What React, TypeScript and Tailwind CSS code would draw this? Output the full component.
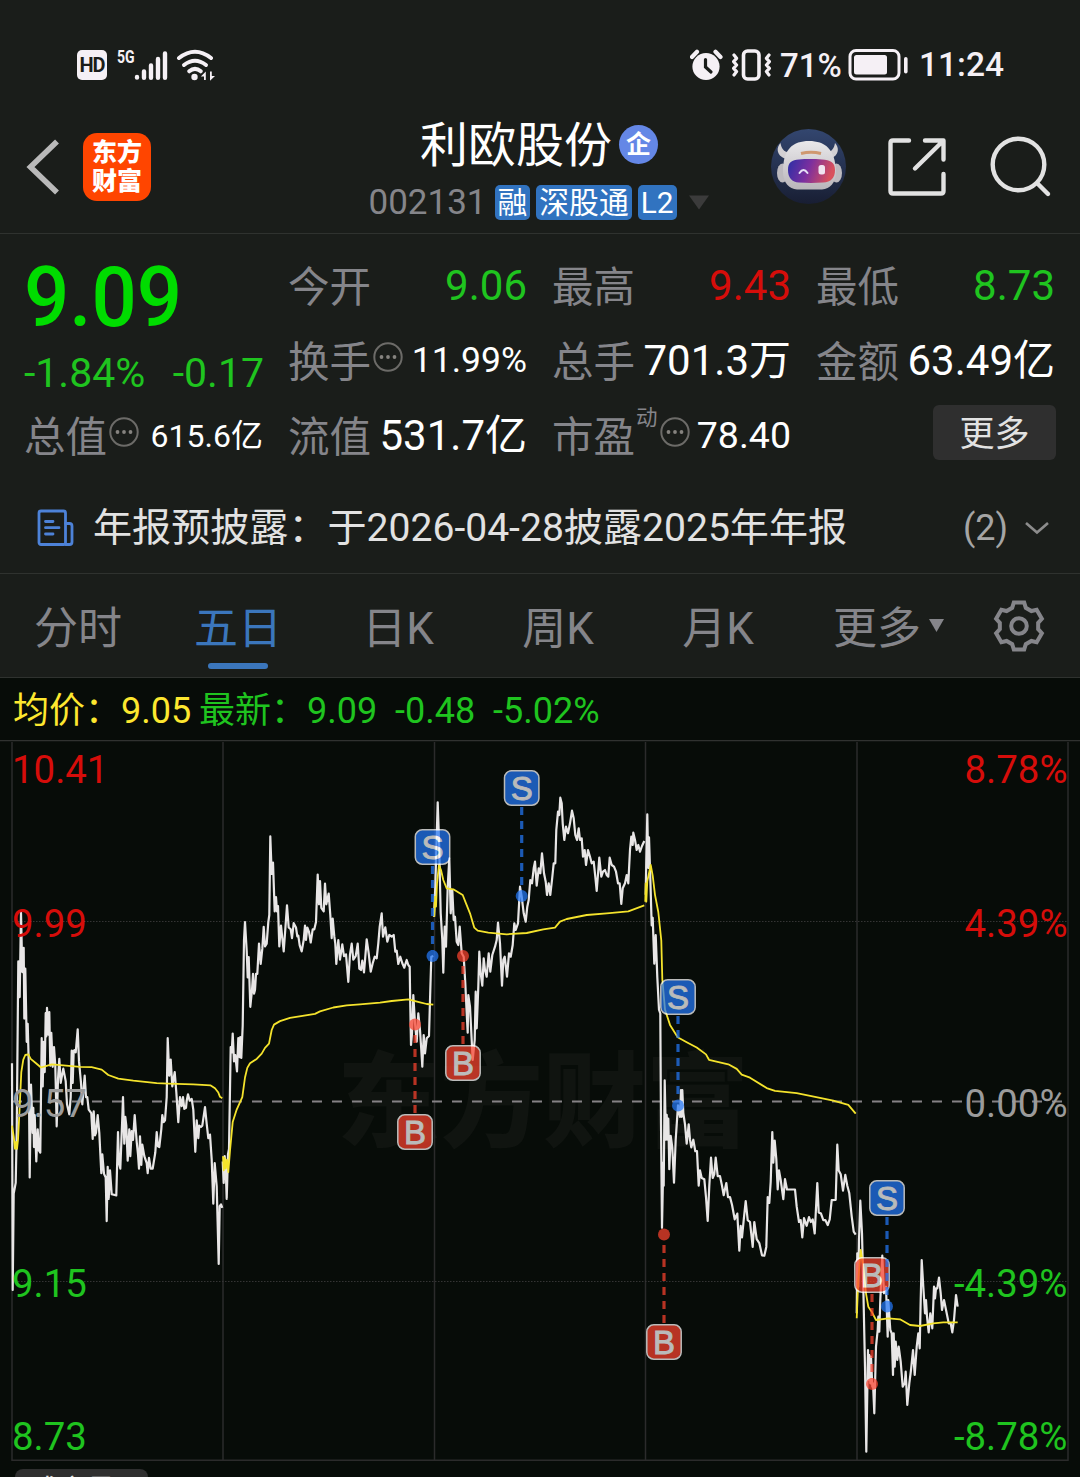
import React from 'react'
import clsx from 'clsx'

type QuoteProps = {
  label: string,
  value: string,
  sup?: string,
  info?: boolean,
  valueClass?: string
}

type Segment = {
  x: number,
  y: number,
  sx: number,
  sy: number,
  points: string
}

type Mark = {
  type: 'S' | 'B',
  x: number,
  box: number,
  dot: number
}

const tabs = ['分时', '五日', '日K', '周K', '月K']

const gridX = [12, 223, 434.5, 645.5, 857, 1068]

const leftLabels = [
  { text: '10.41', y: 783, color: '#d60d0a' },
  { text: '9.99', y: 937, color: '#d60d0a' },
  { text: '9.57', y: 1117, color: '#9b9b9b' },
  { text: '9.15', y: 1297, color: '#1fc41f' },
  { text: '8.73', y: 1450, color: '#1fc41f' }
]

const rightLabels = [
  { text: '8.78%', y: 783, color: '#d60d0a' },
  { text: '4.39%', y: 937, color: '#d60d0a' },
  { text: '0.00%', y: 1117, color: '#9b9b9b' },
  { text: '-4.39%', y: 1297, color: '#1fc41f' },
  { text: '-8.78%', y: 1450, color: '#1fc41f' }
]

const marks: Mark[] = [
  { type: 'S', x: 432.5, box: 847, dot: 956 },
  { type: 'S', x: 521.7, box: 788, dot: 896 },
  { type: 'B', x: 415, box: 1132, dot: 1024.5 },
  { type: 'B', x: 463, box: 1063, dot: 956 },
  { type: 'S', x: 678, box: 997, dot: 1105.5 },
  { type: 'B', x: 664, box: 1342, dot: 1234.5 },
  { type: 'B', x: 872, box: 1275, dot: 1384 },
  { type: 'S', x: 887, box: 1198, dot: 1306.5 }
]

const price: Segment[][] = [
  [
    { x: 0, y: 740, sx: 3, sy: 2.8, points: '36,905 38,1540 41,1270 47,1240 50,1100 55,620 59,720 63,483 67,650 71,582 73,780 76,640 80,845 83,795 86,900 89,1225 93,965 98,1100 100,1030 102,1140 104,1050 109,1180 113,1090 117,1150 121,1155 125,835 128,970 131,845 134,930 137,765 139,830 141,750 145,825 148,762 151,912 154,820 158,915 162,860 166,912 170,1082 174,950 178,893 182,960 187,935 190,920 197,955 201,1020 208,1048 212,1000 215,870 218,960 221,870 225,868 227,875 233,810 237,900 243,960 247,1020 254,940 258,1000 262,1000 266,1035 274,1045 278,1117 281,1040 285,1107 288,1100 293,1050 298,1100 304,1213 307,1160 312,1215 317,1225 320,1347 323,1195 326,1285 330,1205 335,1272 349,1275 354,1098 357,1185 361,1200 366,1080 369,1000 373,1130 376,1055 379,1080 383,1178 388,1090 391,1165 395,1095 399,1120 404,1050 410,1125 414,1160 417,1200 420,1110 424,1190 427,1133 433,1165 440,1185 443,1213 447,1170 452,1200 458,1200 466,1155 470,1098 474,1138 478,1140 484,1090 487,1050 491,1070 495,1065 500,1000 503,835 508,940 512,895 517,970 524,930 529,985 535,1070 540,1000 545,1025 549,1000 553,1033 558,1030 560,1010 564,992 569,1010 575,1005 580,1035 586,1153 590,1065 595,1115 598,1080 603,1083 607,1080 615,1028 620,1075 625,1115 630,1105 635,1175 640,1298 644,1185 650,1250 656,1467 659,1305 663,1300 667,1310' }
  ],
  [
    { x: 0, y: 740, sx: 3, sy: 2.8, points: '668,1180 671,1240 674,1165 677,1200 680,1285 684,1160 687,1145 692,860 695,875 698,822 702,900 706,882 711,928 715,835 719,888 721,832 724,890 728,800 732,560 735,510 740,590 743,665 746,608 751,747 756,700 759,655 762,710 765,700 768,655 772,655 777,570 782,627 787,585 791,523 795,578 800,570 805,510 808,490 811,270 815,375 819,343 824,480 828,440 831,480 834,465 838,578 843,520 851,592 856,530 861,463 866,525 872,530 876,555 881,513 888,525 892,550 895,548 899,575 905,592 911,560 915,520 918,560 922,525 927,537 932,567 938,530 943,530 948,510 953,377 957,460 960,395 964,470 971,480 975,402 979,460 986,430 991,490 995,555 998,500 1003,550 1006,570 1009,627 1015,560 1020,615 1027,572 1032,605 1038,600 1045,677 1050,600 1055,570 1060,615 1067,605 1073,570 1078,640' },
    { x: 360, y: 740, sx: 3, sy: 3, points: '3,690 7,662 12,697 16,650 20,598 26,640 32,695 38,670 44,650 50,655 55,610 59,560 65,520 69,590 76,562 82,605 88,585 95,590 101,585 106,635 110,632 115,672 121,650 127,670 133,683 140,660 145,675 149,680 151,800 153,915 156,880 160,765 165,850 170,905 175,820 180,870 184,930 187,980 191,885 195,940 200,895 207,888 211,750 214,650 220,648' }
  ],
  [
    { x: 360, y: 740, sx: 3, sy: 3, points: '222,530 226,440 230,290 233,187 237,300 242,520 247,600 250,698 254,560 258,620 263,440 268,355 272,520 277,450 281,540 285,530 290,605 295,615 299,560 305,640 311,650 316,730 320,820 323,878 325,765 330,800 338,960 344,900 347,755 350,865 355,740 358,635 362,700 367,737 371,655 375,690 380,710 386,640 391,695 397,645 405,620 410,600 414,548 420,610 426,737 430,660 434,650 441,710 447,640 452,650 458,615 463,550 467,570 474,550 480,440 485,470 491,520 497,545 502,500 506,480 511,420 516,430 521,385 525,365 530,437 536,385 541,400 546,340 552,400 557,425 561,465 566,430 571,465 576,420 581,370 586,370 589,270 594,215 598,225 601,173 605,190 608,250 613,300 618,260 624,280 630,250 636,212 641,235 646,285 651,300 656,265 660,300 665,295 669,350 674,330 678,375 684,330 690,350 695,370 701,365 706,410 710,453 718,353 724,410 729,395 735,390 740,405 745,410 749,353 755,375 762,380 768,395 774,430 779,430 784,492 788,445 795,430 800,405 805,430 810,330 814,290 818,315 820,278 825,300 830,330 835,315 840,335 846,318 853,303' }
  ],
  [
    { x: 600, y: 780, sx: 3, sy: 2.613, points: '137,300 139,210 142,90 145,230 147,150 150,230 155,380 158,360 163,480 167,405 172,515 177,600 181,610 183,900 186,1170 190,1000 191,1060 194,785 197,910 198,940 200,875 203,940 205,885 208,1017 212,930 217,960 222,1052 227,940 234,850 240,880 243,810 245,880 247,810 250,870 255,900 260,950 266,900 270,940 274,960 280,940 286,970 291,970 296,1060 300,1020 305,1040 313,1043 318,1090 323,1152 328,1060 333,987 338,1040 343,1030 347,987 353,1035 360,1035 366,1060 371,1085 379,1053 384,1090 390,1090 396,1110 404,1148 412,1133 418,1230 422,1165 426,1195 431,1150 437,1100 443,1150 450,1155 458,1220 463,1155 470,1200 478,1210 486,1242 493,1243 499,1220 503,1090 508,1105 512,1050 517,920 520,1000 524,942 529,990 533,1070 537,1020 542,1045 550,1095 555,1043 561,1070 570,1070 585,1070 590,1115 597,1155 602,1150 607,1195 612,1145 620,1165 627,1142 632,1155 638,1148 644,1185 652,1053 656,1130 663,1133 670,1150 676,1150 683,1163 689,1148 695,1098 707,1097 712,953 716,1020 722,1030 729,1073 736,1032 742,1060 748,1080 755,1140 761,1180 767,1188' }
  ],
  [
    { x: 800, y: 1100, sx: 3, sy: 3, points: '170,640 172,460 175,560 177,420 181,302 186,400 190,560 195,800 199,1055 204,750 206,840 208,765 211,850 213,770 217,860 219,850 223,940 228,740 233,690 235,650 238,695 241,600 247,467 252,580 258,560 263,710 265,600 271,690 275,700 279,825 281,700 284,800 287,725 292,780 296,740 302,785 308,860 314,850 317,815 322,915 328,850 333,810 339,750 344,825 350,740 355,700 359,745 362,600 365,480 370,560 375,640 378,600 381,650 386,697 391,640 397,685 402,560 405,595 408,565 412,565 417,533 422,580 426,630 432,600 440,640 446,670 452,670 457,697 462,660 468,585 473,620' }
  ]
]

const average: Segment[][] = [
  [
    { x: 0, y: 740, sx: 3, sy: 2.8, points: '36,1080 41,1110 45,1145 48,1125 51,1145 54,1120 58,1050 64,930 70,895 76,882 85,880 92,893 108,905 123,917 135,914 155,908 190,911 240,915 275,916 305,923 325,938 355,948 400,954 470,961 505,962 580,964 632,967 645,975 655,987 660,999 667,1003' }
  ],
  [
    { x: 0, y: 740, sx: 3, sy: 2.8, points: '669,1165 671,1205 674,1170 677,1200 681,1175 685,1210 690,1150 698,1070 710,1035 727,1000 735,945 742,918 750,905 770,893 785,878 795,862 807,850 815,812 822,797 840,787 870,778 945,767 960,760 1000,749 1040,743' },
    { x: 360, y: 740, sx: 3, sy: 3, points: '0,793 60,788 95,783 145,778 180,787 200,792 220,794' }
  ],
  [
    { x: 360, y: 740, sx: 3, sy: 3, points: '223,530 225,470 228,500 231,430 237,375 243,390 250,420 260,445 280,448 308,465 318,490 330,520 336,540 343,563 353,572 385,578 440,583 500,579 550,568 585,563 600,545 620,537 680,525 740,520 805,514 853,496' }
  ],
  [
    { x: 600, y: 780, sx: 3, sy: 2.613, points: '136,318 137,270 139,318 142,265 152,222 158,250 165,300 175,345 184,420 187,520 195,600 210,640 233,672 260,685 290,699 318,717 327,731 385,743 410,755 425,770 450,778 500,805 525,812 590,818 700,838 745,849 767,872' }
  ],
  [
    { x: 800, y: 1100, sx: 3, sy: 3, points: '170,655 175,540 182,450 190,500 198,580 205,620 215,635 228,660 265,655 300,658 330,675 360,678 400,670 430,667 473,667' }
  ]
]

const toPoints = (segments: Segment[]) =>
  segments
    .map(s =>
      s.points
        .split(' ')
        .map(p => {
          const [px, py] = p.split(',').map(Number)
          return `${(s.x + px / s.sx).toFixed(1)},${(s.y + py / s.sy).toFixed(1)}`
        })
        .join(' ')
    )
    .join(' ')

const gearPoints = Array.from({ length: 6 })
  .flatMap((_, i) => {
    const a = (i * Math.PI) / 3
    return [[-6.8, -18.2], [-5.2, -23.4], [5.2, -23.4], [6.8, -18.2]].map(([x, y]) => {
      const rx = 26 + x * Math.cos(a) - y * Math.sin(a)
      const ry = 26 + x * Math.sin(a) + y * Math.cos(a)
      return `${rx.toFixed(2)},${ry.toFixed(2)}`
    })
  })
  .join(' ')

const StatusBar = () => (
  <div className="flex h-[100px] items-center justify-between pt-[30px] pl-[77px] pr-[77px] text-[33.500px] font-medium leading-none text-[#f5f0f5]">
    <div className="flex items-center">
      <div className="flex h-[30px] w-[30px] items-center justify-center rounded-[5px] bg-[#f5f0f5] text-[20px] font-bold tracking-[-1px] text-[#1a1d1a]">HD</div>
      <div className="ml-[10px] mb-[17px] flex h-[16px] w-[18px] items-center">
        <span className="origin-left scale-x-[0.78] text-[18px] font-bold">5G</span>
      </div>
      <svg width="34" height="32" viewBox="0 0 34 32" className="-ml-[1px]" stroke="#f5f0f5" strokeWidth="4.4" strokeLinecap="round">
        <path d="M3 28v0.6M10 22.5v6.2M17 16.5v12.2M24 10v18.7M31 4.5v24.2" />
      </svg>
      <svg width="40" height="32" viewBox="0 0 40 32" className="ml-[8px]" fill="none" stroke="#f5f0f5" strokeWidth="4" strokeLinecap="round">
        <path d="M3 9Q19 -3.500 35 9" />
        <path d="M8 16Q19 7.500 30 16" />
        <path d="M13.200 22.300Q19 17.300 24.800 22.300" />
        <circle cx="18.500" cy="28" r="3.200" fill="#f5f0f5" stroke="none" />
        <path d="M24.800 27.500l5-5v8.500h-1.800v-3.500zM39 27l-5 4.700v-9.200h1.800v4.500z" fill="#f5f0f5" stroke="none" />
      </svg>
    </div>
    <div className="flex items-center">
      <svg width="34" height="32" viewBox="0 0 34 32" fill="none" className="-mr-[1px]">
        <circle cx="16" cy="17.500" r="13.600" fill="#f5f0f5" />
        <path d="M2 8l5-5.200M30.500 8l-5-5.200" stroke="#f5f0f5" strokeWidth="4.200" strokeLinecap="round" />
        <path d="M15.500 10.500v7.500l5.500 5" stroke="#1a1d1a" strokeWidth="3.200" strokeLinecap="round" />
      </svg>
      <svg width="40" height="32" viewBox="0 0 40 32" className="ml-[8px]" fill="none" stroke="#f5f0f5">
        <rect x="12.500" y="2" width="15.500" height="28" rx="4" strokeWidth="3.600" />
        <path d="M3 6l2.600 3.300-3 3.300 3 3.400-3 3.300 3 3.300-2.600 3.400M38 6l-2.600 3.300 3 3.300-3 3.400 3 3.300-3 3.300 2.600 3.400" strokeWidth="3.200" strokeLinejoin="round" strokeLinecap="round" />
      </svg>
      <span className="ml-[9px] w-[62px] text-[33px]">71%</span>
      <svg width="62" height="34" viewBox="0 0 62 34" className="ml-[6px]">
        <rect x="2" y="2.500" width="49" height="28.500" rx="6" fill="none" stroke="#f5f0f5" strokeWidth="3" />
        <rect x="6" y="7" width="33" height="19.500" rx="2.500" fill="#f5f0f5" />
        <rect x="56" y="9" width="3.600" height="16.500" rx="1.800" fill="#f5f0f5" />
      </svg>
      <span className="ml-[9px] w-[84px]">11:24</span>
    </div>
  </div>
)

const Robot = () => (
  <svg width="76" height="76" viewBox="0 0 76 76">
    <defs>
      <linearGradient id="sky" x1="0" y1="0" x2="0" y2="1">
        <stop offset="0" stopColor="#33466f" />
        <stop offset="1" stopColor="#181e33" />
      </linearGradient>
      <linearGradient id="shell" x1="0" y1="0" x2="0" y2="1">
        <stop offset="0" stopColor="#e9e8ea" />
        <stop offset="1" stopColor="#b9b5ba" />
      </linearGradient>
      <linearGradient id="visor" x1="0" y1="0" x2="1" y2="0.2">
        <stop offset="0" stopColor="#2b2fa6" />
        <stop offset="0.5" stopColor="#7c2f9f" />
        <stop offset="1" stopColor="#d8505c" />
      </linearGradient>
    </defs>
    <circle cx="37.500" cy="37.500" r="37.500" fill="url(#sky)" />
    <path d="M9.500 14c-4 4-5 12 5 16l5-7c-6 1-9-3-10-9zM64 14c4 4 5 12-5 16l-5-7c6 1 9-3 10-9z" fill="#d3d0d3" />
    <ellipse cx="11.500" cy="44" rx="5.500" ry="9.500" fill="#bdbabf" />
    <ellipse cx="65.500" cy="44" rx="5.500" ry="9.500" fill="#bdbabf" />
    <path d="M12 42C12 20 22 12 38 12s26 8 27 30c0 12-6 18-14 18.500H26C18 60 12 54 12 42z" fill="url(#shell)" />
    <path d="M30 24.500q10-2.500 20 0" stroke="#cf9870" strokeWidth="3" fill="none" />
    <path d="M17 41c0-8 4-10 11-10.500 7-.6 15-.6 23 0C59 31 64 33 64 41s-4 12-12 12.500c-8 .5-16 .5-24 0C21 53 17 49 17 41z" fill="url(#visor)" />
    <path d="M28.500 44q4-6 8 0" stroke="#e6dff5" strokeWidth="2" fill="none" strokeLinecap="round" />
    <rect x="47.500" y="36" width="6.500" height="9.500" rx="2.500" fill="#f0e4f0" />
  </svg>
)

const Tag = ({ text }: { text: string }) => (
  <span className="flex h-[35px] items-center rounded-[5px] bg-[#3173c0] px-[3px] pt-px text-[29.800px] leading-none text-white">{text}</span>
)

const Header = () => (
  <div className="flex h-[134px] items-center justify-between border-b border-[#2f322f] pl-[26px] pr-[28px]">
    <div className="flex w-[310px] items-center">
      <svg width="36" height="58" viewBox="0 0 36 58" fill="none" stroke="#b9b9b9" strokeWidth="5.600">
        <path d="M31 3.500L4.500 29L31 54.500" />
      </svg>
      <div className="ml-[21px] flex h-[68px] w-[68px] flex-col items-center justify-center rounded-[14px] bg-[#ff4500] text-[25px] font-black leading-[29px] text-white">
        <span>东方</span>
        <span>财富</span>
      </div>
    </div>
    <div className="flex w-[400px] flex-col items-center pt-[12px]">
      <div className="flex items-center text-[48px] leading-[58px] text-white">
        <span className="pt-[2px]">利欧股份</span>
        <span className="ml-[7px] flex h-[39px] w-[39px] items-center justify-center rounded-full bg-[#6487e6] text-[25px] font-bold leading-none">企</span>
      </div>
      <div className="flex h-[56px] items-center gap-[6px]">
        <span className="mr-[2px] text-[35px] leading-none text-[#85858a]">002131</span>
        <Tag text="融" />
        <Tag text="深股通" />
        <Tag text="L2" />
        <svg width="22" height="15" viewBox="0 0 22 15" className="ml-[5px]">
          <path d="M1 0.500h20L11 14.500z" fill="#3b3b3b" />
        </svg>
      </div>
    </div>
    <div className="flex w-[310px] items-center justify-end">
      <Robot />
      <svg width="60" height="60" viewBox="0 0 60 60" className="ml-[40px]" fill="none" stroke="#e2e2e2" strokeWidth="4.400" strokeLinecap="round" strokeLinejoin="round">
        <path d="M22 3.500H6Q3.500 3.500 3.500 6V54Q3.500 56.500 6 56.500H54Q56.500 56.500 56.500 54V37" />
        <path d="M38 3.500H56.500V22.500M55.500 4.500L28 31.500" />
      </svg>
      <svg width="62" height="62" viewBox="0 0 62 62" className="ml-[43px]" fill="none" stroke="#e2e2e2" strokeWidth="4.400" strokeLinecap="round">
        <circle cx="28.500" cy="28.500" r="25.800" />
        <path d="M47.500 47.500l10.500 10.500" />
      </svg>
    </div>
  </div>
)

const InfoDot = () => (
  <svg width="30" height="30" viewBox="0 0 30 30" className="mb-[10px] ml-[2px] shrink-0">
    <circle cx="15" cy="15" r="13.700" fill="none" stroke="#6c6b68" strokeWidth="2" />
    <circle cx="8.500" cy="15" r="1.900" fill="#85837f" />
    <circle cx="15" cy="15" r="1.900" fill="#85837f" />
    <circle cx="21.500" cy="15" r="1.900" fill="#85837f" />
  </svg>
)

const Quote = ({ label, value, sup, info, valueClass = 'text-[42px] text-white' }: QuoteProps) => (
  <div className="flex h-[75px] items-center justify-between leading-none">
    <div className="flex items-center whitespace-nowrap text-[41.500px] text-[#85858a]">
      <span className="pt-[2px]">{label}</span>
      {sup && <span className="mb-[38px] ml-[1px] text-[21.500px]">{sup}</span>}
      {info && <InfoDot />}
    </div>
    <span className={clsx('whitespace-nowrap pr-px pb-[2px]', valueClass)}>{value}</span>
  </div>
)

const Quotes = () => (
  <div className="grid grid-cols-4 gap-x-6 px-6 pt-[15px]">
    <div className="row-span-2 flex flex-col leading-none text-[#00dc00]">
      <span className="mt-[5px] origin-left scale-x-[0.955] text-[83.500px] font-medium leading-[88px]">9.09</span>
      <div className="mt-[6px] flex justify-between text-[41px] leading-[50px] text-[#1fc41f]">
        <span>-1.84%</span>
        <span>-0.17</span>
      </div>
    </div>
    <Quote label="今开" value="9.06" valueClass="text-[42px] text-[#1fc41f]" />
    <Quote label="最高" value="9.43" valueClass="text-[42px] text-[#d60d0a]" />
    <Quote label="最低" value="8.73" valueClass="text-[42px] text-[#1fc41f]" />
    <Quote label="换手" value="11.99%" info valueClass="text-[35.500px] text-white" />
    <Quote label="总手" value="701.3万" />
    <Quote label="金额" value="63.49亿" />
    <Quote label="总值" value="615.6亿" info valueClass="text-[32px] text-white" />
    <Quote label="流值" value="531.7亿" />
    <Quote label="市盈" value="78.40" sup="动" info valueClass="text-[37.500px] text-white" />
    <div className="flex h-[75px] items-start justify-end pt-[6px]">
      <button className="flex h-[55px] w-[123px] items-center justify-center rounded-md bg-[#2f2f2f] pt-[4px] text-[35px] leading-none text-[#e2e2e2]">更多</button>
    </div>
  </div>
)

const Notice = () => (
  <div className="flex h-[100px] items-center border-b border-[#2f322f] pt-[9px] pl-[36px] pr-[31px] leading-none">
    <svg width="39" height="38" viewBox="0 0 39 38" fill="none" stroke="#4d82d8" strokeWidth="2.800" strokeLinecap="round" strokeLinejoin="round">
      <rect x="3" y="2" width="26.500" height="33.500" rx="2" />
      <path d="M29.500 14.500h4q2.500 0 2.500 2.500v16q0 2.500-2.500 2.500h-4" />
      <path d="M9.500 12.500h7.500M9.500 18.700h13.500M9.500 25h7.500" />
    </svg>
    <span className="ml-[18px] whitespace-nowrap pt-px text-[39.100px] text-[#e2e2e2]">年报预披露：于2026-04-28披露2025年年报</span>
    <span className="ml-auto text-[36px] text-[#a5a5a5]">(2)</span>
    <svg width="24" height="14" viewBox="0 0 24 14" className="ml-[17px]" fill="none" stroke="#8c8c8c" strokeWidth="2.600">
      <path d="M1 2l11 9.500L23 2" />
    </svg>
  </div>
)

const Tabs = () => (
  <div className="-ml-[2px] flex h-[104px] border-b border-[#2f322f] text-[44px] leading-none text-[#85858a]">
    {tabs.map((tab, i) => (
      <div key={tab} className={clsx('flex w-[160px] flex-col items-center pt-[33px]', i === 1 && 'text-[#3b76bc]')}>
        <span>{tab}</span>
        {i === 1 && <span className="mt-[12px] h-[6px] w-[60px] rounded-full bg-[#3b76bc]" />}
      </div>
    ))}
    <div className="flex items-start pt-[33px] pl-[35px]">
      <span>更多</span>
      <svg width="15" height="13" viewBox="0 0 15 13" className="mt-[12px] ml-[8px]">
        <path d="M0 0h15L7.500 13z" fill="#85858a" />
      </svg>
    </div>
    <svg width="52" height="52" viewBox="0 0 52 52" className="mt-[26px] ml-[49px]" fill="none" stroke="#85858a" strokeWidth="4">
      <polygon points={gearPoints} />
      <circle cx="26" cy="26" r="7.800" />
    </svg>
  </div>
)

const PriceInfo = () => (
  <div className="flex h-[62px] items-center bg-[#070c08] pt-[3px] pl-[13px] text-[36px] leading-none whitespace-pre text-[#1fc41f]">
    <span className="w-[186px] text-[#fde72f]">均价：9.05</span>
    <span className="w-[196px]">最新：9.09</span>
    <span className="w-[98px]">-0.48</span>
    <span>-5.02%</span>
  </div>
)

const Marker = ({ type, x, box, dot }: Mark) => {
  const color = type === 'S' ? '#2478f8' : '#fb422e'
  const start = dot > box ? box + 19 : box - 19
  return (
    <g opacity="0.72">
      <line x1={x} y1={start} x2={x} y2={dot} stroke={color} strokeWidth="3.200" strokeDasharray="8 6" />
      <circle cx={x} cy={dot} r="6" fill={color} />
      <rect x={x - 17.2} y={box - 17.2} width="34.400" height="34.400" rx="7" fill={color} stroke="#fff" strokeWidth="1.500" />
      <text x={x} y={box + 12} textAnchor="middle" fontSize="33" fontFamily="Liberation Sans" fill="#fff" stroke="#fff" strokeWidth="0.9">{type}</text>
    </g>
  )
}

const Chart = () => (
  <svg width="1080" height="721" viewBox="0 740 1080 721" className="block bg-[#070c08]">
    <text x="337" y="1139" fontSize="103" fontWeight="900" fill="#101410">东方财富</text>
    <g stroke="#2b2b2b" strokeWidth="1.500">
      {gridX.map(x => <line key={x} x1={x} y1="742" x2={x} y2="1461" />)}
      <line x1="0" y1="740.5" x2="1080" y2="740.5" stroke="#303230" />
      <line x1="12" y1="1460.3" x2="1068" y2="1460.3" />
    </g>
    <g stroke="#343434" strokeWidth="1" strokeDasharray="1.500 1.500">
      <line x1="12" y1="921.5" x2="1068" y2="921.5" />
      <line x1="12" y1="1281.500" x2="1068" y2="1281.500" />
    </g>
    <line x1="12" y1="1101.500" x2="1068" y2="1101.500" stroke="#858285" strokeWidth="1.800" strokeDasharray="10 10" />
    <g fill="none" stroke="#e8e6e6" strokeWidth="2.200" strokeLinejoin="round">
      {price.map((day, i) => <polyline key={i} points={toPoints(day)} />)}
    </g>
    <g fill="none" stroke="#f4e32c" strokeWidth="1.800" strokeLinejoin="round">
      {average.map((day, i) => <polyline key={i} points={toPoints(day)} />)}
    </g>
    <g fontSize="38.400">
      {leftLabels.map(l => <text key={l.text} x="12" y={l.y} fill={l.color}>{l.text}</text>)}
      {rightLabels.map(l => <text key={l.text} x="1067.500" y={l.y} fill={l.color} textAnchor="end">{l.text}</text>)}
    </g>
    {marks.map(m => <Marker key={`${m.type}${m.x}`} {...m} />)}
  </svg>
)

const App = () => {
  return (
    <div className="h-[1477px] w-[1080px] overflow-hidden bg-[#1a1d1a] font-[Roboto,'Noto_Sans_CJK_SC',sans-serif]">
      <StatusBar />
      <Header />
      <Quotes />
      <Notice />
      <Tabs />
      <PriceInfo />
      <Chart />
      <div className="h-[16px] overflow-hidden bg-[#070c08] pt-[8px] pl-[15px]">
        <div className="h-[40px] w-[133px] rounded-[8px] bg-[#2f2f2f] pt-[8px] pl-[16px] text-[28px] leading-none text-[#e2e2e2]">成交量</div>
      </div>
    </div>
  )
}

export default App
